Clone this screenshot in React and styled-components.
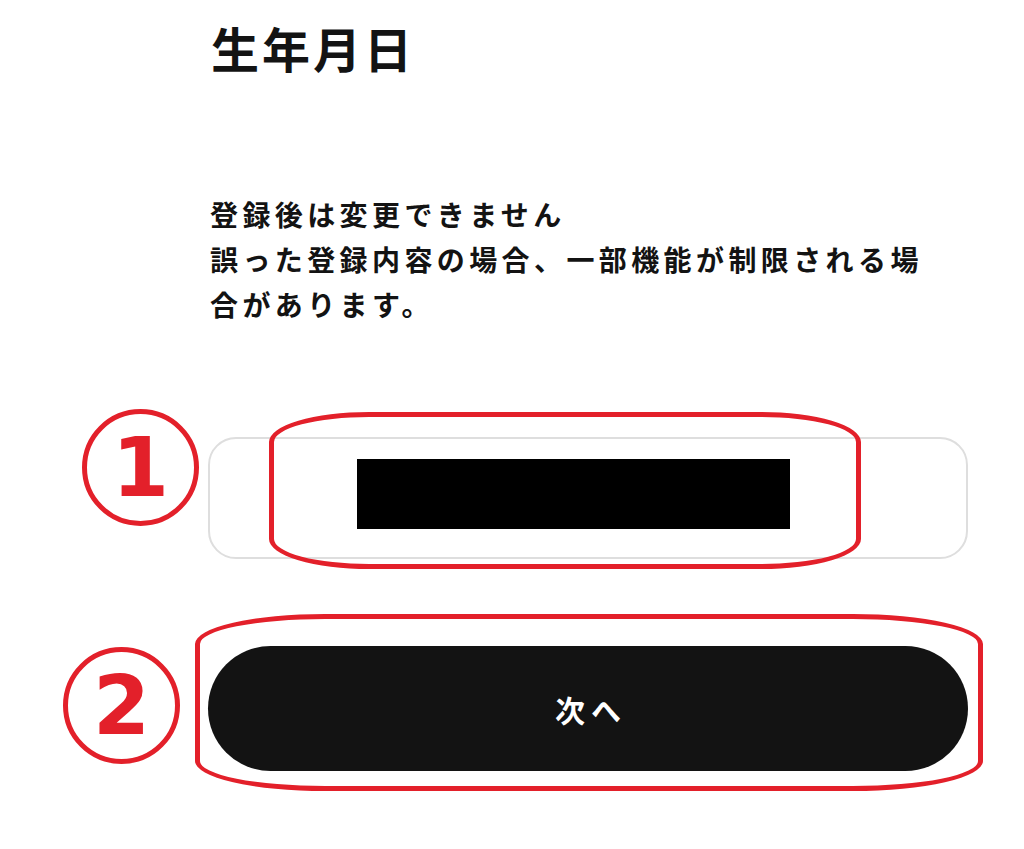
import { createGlobalStyle } from 'styled-components'
import styled from 'styled-components'

const GlobalStyle = createGlobalStyle`
	html, body, #root {
		margin: 0;
		padding: 0;
		min-height: 100vh;
		background: #fff;
	}
	body {
		font-family: 'Noto Sans CJK JP', 'Noto Sans', sans-serif;
		color: #131313;
	}
`

const RED = '#e3202a'

function App() {
	return (
		<>
			<GlobalStyle />
			<Page>
				<Title>生年月日</Title>
				<Notice>
					登録後は変更できません
					<br />
					誤った登録内容の場合、一部機能が制限される場
					<br />
					合があります。
				</Notice>

				<Badge $right={9} $top={82} $row={3}>
					1
				</Badge>
				<Row $gap={110} $row={3}>
					<DateField>
						<Redacted />
					</DateField>
					<Ring $left={61} $top={-25} $w={592} $h={157} $rx={100} />
				</Row>

				<Badge $right={28} $top={88} $row={4}>
					2
				</Badge>
				<Row $gap={87} $row={4}>
					<NextButton type='button'>次へ</NextButton>
					<Ring $left={-13} $top={-32} $w={788} $h={177} $rx={130} />
				</Row>
			</Page>
		</>
	)
}

export default App

const Page = styled.main`
	display: grid;
	grid-template-columns: 208px 760px;
	padding-top: 14px;
	padding-bottom: 40px;
`

const Title = styled.h1`
	grid-column: 2;
	margin: 0;
	font-size: 48px;
	line-height: 67px;
	font-weight: 700;
	letter-spacing: 3px;
	padding-left: 3px;
`

const Notice = styled.p`
	grid-column: 2;
	margin: 111px 0 0;
	font-size: 28px;
	line-height: 45px;
	font-weight: 700;
	letter-spacing: 4.4px;
	padding-left: 2px;
`

const Row = styled.div`
	grid-column: 2;
	grid-row: ${(p) => p.$row};
	position: relative;
	margin-top: ${(p) => p.$gap}px;
`

const DateField = styled.div`
	box-sizing: border-box;
	height: 122px;
	border: 2px solid #dedede;
	border-radius: 28px;
	padding: 20px 0 0 147px;
	background: #fff;
`

const Redacted = styled.div`
	width: 433px;
	height: 70px;
	background: #000;
`

const NextButton = styled.button`
	display: block;
	width: 100%;
	height: 125px;
	border: none;
	border-radius: 63px;
	background: #131313;
	color: #fff;
	font-family: 'Noto Sans CJK JP', 'Noto Sans', sans-serif;
	font-size: 30px;
	font-weight: 700;
	letter-spacing: 6px;
	padding: 0 0 0 6px;
	cursor: pointer;
`

const Ring = styled.div`
	position: absolute;
	left: ${(p) => p.$left}px;
	top: ${(p) => p.$top}px;
	width: ${(p) => p.$w}px;
	height: ${(p) => p.$h}px;
	box-sizing: border-box;
	border: 5px solid ${RED};
	border-radius: ${(p) => p.$rx}px / 30px;
	pointer-events: none;
`

const Badge = styled.span`
	grid-column: 1;
	grid-row: ${(p) => p.$row};
	align-self: start;
	justify-self: end;
	margin-right: ${(p) => p.$right}px;
	margin-top: ${(p) => p.$top}px;
	box-sizing: border-box;
	width: 117px;
	height: 117px;
	border: 5px solid ${RED};
	border-radius: 50%;
	display: flex;
	align-items: center;
	justify-content: center;
	color: ${RED};
	font-family: 'DejaVu Sans', 'Liberation Sans', sans-serif;
	font-weight: 700;
	font-size: 82px;
	line-height: 1;
`
